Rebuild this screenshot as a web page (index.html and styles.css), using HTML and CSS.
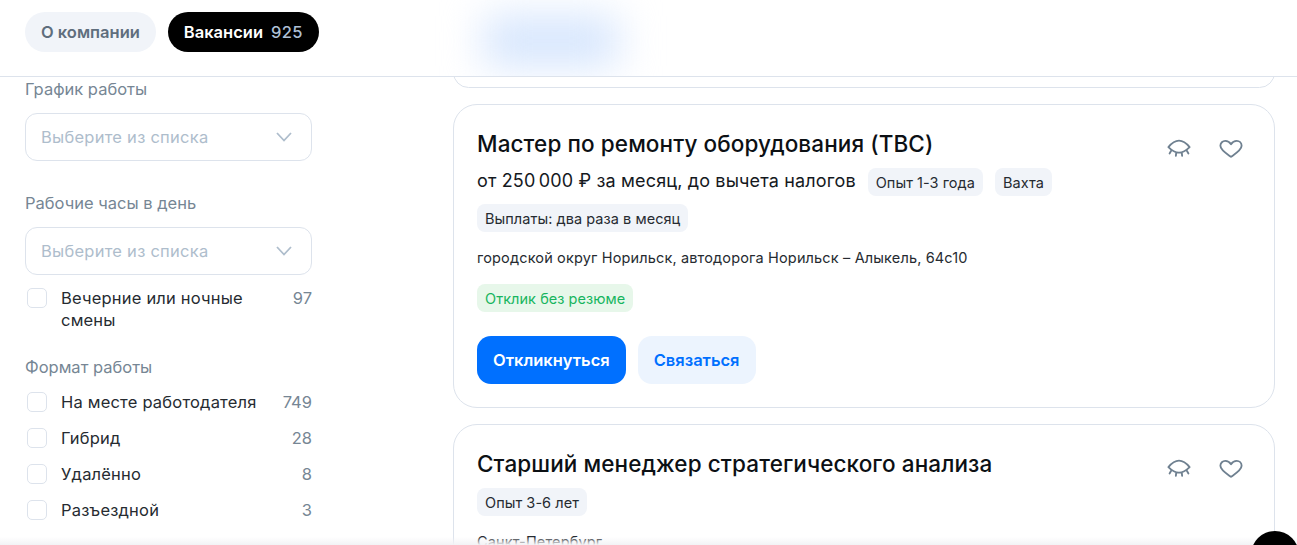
FILE: index.html
```html
<!DOCTYPE html>
<html lang="ru">
<head>
<meta charset="UTF-8">
<meta name="viewport" content="width=device-width, initial-scale=1.0">
<title>Вакансии компании</title>
<link rel="stylesheet" href="styles.css">
</head>
<body>

<header class="topbar">
    <nav class="tabs">
        <a class="tab">О компании</a>
        <a class="tab tab-active">Вакансии <span class="tab-count">925</span></a>
    </nav>
    <div class="blob"></div>
</header>

<div class="page">
    <aside class="filters">
        <div class="filter-label">График работы</div>
        <div class="select">
            <span>Выберите из списка</span>
            <svg class="chevron" viewBox="0 0 16 10"><path d="M1 1 L8 8.500 L15 1"></path></svg>
        </div>

        <div class="filter-label filter-label-second">Рабочие часы в день</div>
        <div class="select">
            <span>Выберите из списка</span>
            <svg class="chevron" viewBox="0 0 16 10"><path d="M1 1 L8 8.500 L15 1"></path></svg>
        </div>
        <label class="check check-first">
            <span class="box"></span>
            <span class="check-text">Вечерние или ночные смены</span>
            <span class="check-count">97</span>
        </label>

        <div class="filter-label filter-label-third">Формат работы</div>
        <label class="check">
            <span class="box"></span>
            <span class="check-text">На месте работодателя</span>
            <span class="check-count">749</span>
        </label>
        <label class="check">
            <span class="box"></span>
            <span class="check-text">Гибрид</span>
            <span class="check-count">28</span>
        </label>
        <label class="check">
            <span class="box"></span>
            <span class="check-text">Удалённо</span>
            <span class="check-count">8</span>
        </label>
        <label class="check">
            <span class="box"></span>
            <span class="check-text">Разъездной</span>
            <span class="check-count">3</span>
        </label>
    </aside>

    <main class="results">
        <div class="card card-prev"></div>

        <article class="card">
            <div class="card-icons">
                <svg class="icon" viewBox="0 0 26 20"><path d="M1.500 8 C6 2.500 9 1 13 1 C17 1 20 2.500 24.500 8 C20 12.500 17 14 13 14 C9 14 6 12.500 1.500 8 Z M4.500 12 L2.800 14.800 M10 14 L9.600 17.500 M16 14 L16.400 17.500 M21.500 12 L23.200 14.800"></path></svg>
                <svg class="icon" viewBox="0 0 26 20"><path d="M13 18.500 C8 15 1.500 11 1.500 6.500 C1.500 3.300 4 1.200 6.800 1.200 C9.300 1.200 11.500 2.500 13 4.800 C14.500 2.500 16.700 1.200 19.200 1.200 C22 1.200 24.500 3.300 24.500 6.500 C24.500 11 18 15 13 18.500 Z"></path></svg>
            </div>
            <h2 class="card-title">Мастер по ремонту оборудования (ТВС)</h2>
            <div class="card-tags">
                <span class="salary">от 250&#8201;000 ₽ за месяц, до вычета налогов</span>
                <span class="tag">Опыт 1-3 года</span>
                <span class="tag">Вахта</span>
                <span class="tag">Выплаты: два раза в месяц</span>
            </div>
            <p class="address">городской округ Норильск, автодорога Норильск – Алыкель, 64с10</p>
            <span class="tag tag-green">Отклик без резюме</span>
            <div class="card-actions">
                <a class="btn btn-primary">Откликнуться</a>
                <a class="btn btn-light">Связаться</a>
            </div>
        </article>

        <article class="card">
            <div class="card-icons">
                <svg class="icon" viewBox="0 0 26 20"><path d="M1.500 8 C6 2.500 9 1 13 1 C17 1 20 2.500 24.500 8 C20 12.500 17 14 13 14 C9 14 6 12.500 1.500 8 Z M4.500 12 L2.800 14.800 M10 14 L9.600 17.500 M16 14 L16.400 17.500 M21.500 12 L23.200 14.800"></path></svg>
                <svg class="icon" viewBox="0 0 26 20"><path d="M13 18.500 C8 15 1.500 11 1.500 6.500 C1.500 3.300 4 1.200 6.800 1.200 C9.300 1.200 11.500 2.500 13 4.800 C14.500 2.500 16.700 1.200 19.200 1.200 C22 1.200 24.500 3.300 24.500 6.500 C24.500 11 18 15 13 18.500 Z"></path></svg>
            </div>
            <h2 class="card-title">Старший менеджер стратегического анализа</h2>
            <div class="card-tags">
                <span class="tag">Опыт 3-6 лет</span>
            </div>
            <p class="address">Санкт-Петербург</p>
        </article>
    </main>
</div>

<div class="bottom-fade"></div>
<div class="chat-button"></div>

</body>
</html>
```

FILE: styles.css
```css
body {
  margin: 0;
  height: 545px;
  overflow: hidden;
  background-color: #fff;
  color: #15191e;
  font-family: "Inter", "Noto Sans", sans-serif;
  position: relative;
}

/* шапка с вкладками */
.topbar {
  position: relative;
  z-index: 2;
  height: 76px;
  background-color: #fff;
  border-bottom: 1px solid #dde3ec;
  overflow: hidden;
}
.tabs {
  display: flex;
  gap: 12px;
  padding: 12px 0 0 25px;
}
.tab {
  display: flex;
  align-items: center;
  height: 40px;
  padding: 0 16px;
  border-radius: 20px;
  background-color: #f1f4f9;
  color: #5f6e7d;
  font-size: 16.500px;
  font-weight: 600;
}
.tab-active {
  background-color: #000;
  color: #fff;
  gap: 8px;
}
.tab-count {
  color: #aebfd4;
  font-weight: 500;
  letter-spacing: 0.300px;
}
.blob {
  position: absolute;
  left: 484px;
  top: 16px;
  width: 134px;
  height: 50px;
  background-color: #d5e5fd;
  filter: blur(20px);
}

.page {
  display: flex;
}

/* левая колонка с фильтрами */
.filters {
  width: 287px;
  margin-left: 25px;
  padding-top: 2px;
  flex-shrink: 0;
}
.filter-label {
  height: 20px;
  line-height: 20px;
  color: #768694;
  font-size: 16.500px;
}
.filter-label-second {
  margin-top: 32px;
}
.filter-label-third {
  margin-top: 26px;
  margin-bottom: 14px;
}
.select {
  display: flex;
  align-items: center;
  justify-content: space-between;
  box-sizing: border-box;
  height: 48px;
  margin-top: 14px;
  padding: 0 19px 0 15px;
  border: 1px solid #dde3ec;
  border-radius: 12px;
  color: #aebdcc;
  font-size: 16.500px;
  letter-spacing: 0.250px;
}
.chevron {
  width: 16px;
  height: 10px;
  fill: none;
  stroke: #aebdcc;
  stroke-width: 1.800;
}
.check {
  display: flex;
  align-items: flex-start;
  min-height: 22px;
  margin-bottom: 14px;
  line-height: 22px;
  font-size: 16.500px;
  color: #262b31;
}
.check-first {
  margin-top: 12px;
}
.box {
  box-sizing: border-box;
  width: 20px;
  height: 20px;
  margin: 1px 14px 0 2px;
  border: 1px solid #dde3ec;
  border-radius: 5px;
  flex-shrink: 0;
}
.check-text {
  max-width: 205px;
  letter-spacing: 0.200px;
}
.check-count {
  margin-left: auto;
  color: #768694;
}

/* карточки вакансий */
.results {
  width: 822px;
  margin-left: 141px;
  flex-shrink: 0;
}
.card {
  position: relative;
  box-sizing: border-box;
  margin-bottom: 16px;
  padding: 24px 23px 23px;
  border: 1px solid #dde3ec;
  border-radius: 24px;
  background-color: #fff;
}
.card-prev {
  height: 31px;
  margin-top: -20px;
  padding: 0;
}
.card-icons {
  position: absolute;
  top: 34px;
  right: 31px;
  display: flex;
  gap: 28px;
}
.icon {
  width: 24px;
  height: 20px;
  fill: none;
  stroke: #6f8090;
  stroke-width: 2;
  stroke-linecap: round;
  stroke-linejoin: round;
}
.card-title {
  margin: 0;
  height: 30px;
  line-height: 30px;
  font-size: 22.500px;
  font-weight: 500;
  letter-spacing: 0.100px;
  color: #0c1014;
}
.card-tags {
  display: flex;
  flex-wrap: wrap;
  align-items: center;
  gap: 8px 12px;
  width: 640px;
  margin-top: 9px;
}
.salary {
  font-size: 18px;
  letter-spacing: 0.150px;
  line-height: 26px;
  margin-top: -2px;
}
.tag {
  display: inline-flex;
  align-items: center;
  height: 28px;
  padding: 0 8px;
  border-radius: 8px;
  background-color: #f1f4f9;
  font-size: 14.500px;
  letter-spacing: 0.050px;
  color: #262b31;
}
.tag-green {
  background-color: #e7f7ea;
  color: #17b55e;
}
.address {
  margin: 16px 0;
  height: 20px;
  line-height: 20px;
  font-size: 14.500px;
  letter-spacing: 0.150px;
  color: #262b31;
}
.card-actions {
  display: flex;
  gap: 12px;
  margin-top: 24px;
}
.btn {
  display: flex;
  align-items: center;
  height: 48px;
  padding: 0 16px;
  border-radius: 14px;
  font-size: 16.500px;
  font-weight: 600;
}
.btn-primary {
  background-color: #0070ff;
  color: #fff;
}
.btn-light {
  background-color: #ecf4fe;
  color: #0070ff;
}

/* низ окна */
.bottom-fade {
  position: absolute;
  left: 0;
  right: 0;
  bottom: 0;
  height: 8px;
  background: linear-gradient(to bottom, rgba(255,255,255,0), #f2f3f5);
  z-index: 3;
}
.chat-button {
  position: absolute;
  left: 1251px;
  top: 531px;
  width: 48px;
  height: 48px;
  border-radius: 50%;
  background-color: #000;
  z-index: 4;
}
```
